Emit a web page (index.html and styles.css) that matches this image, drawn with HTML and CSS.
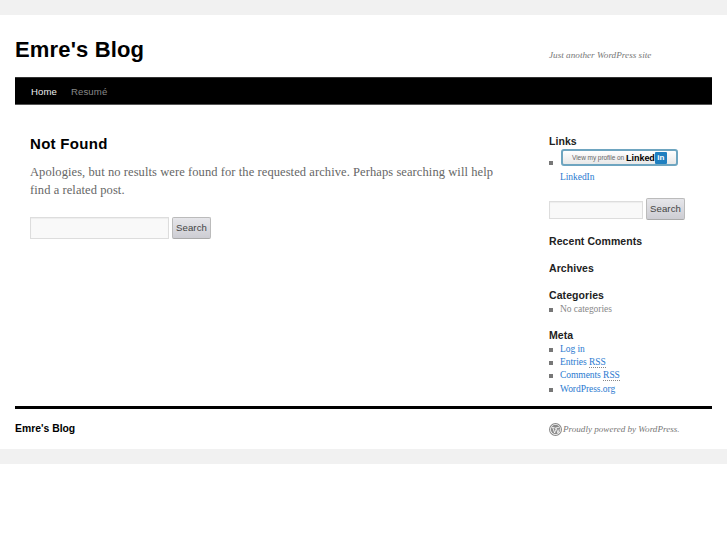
FILE: index.html
```html
<!DOCTYPE html>
<html lang="en">
<head>
<meta charset="utf-8">
<title>Emre's Blog</title>
<link rel="stylesheet" href="styles.css">
</head>
<body>
<div class="wrapper">
  <header class="masthead">
    <a class="site-title" href="#">Emre's Blog</a>
    <div class="tagline">Just another WordPress site</div>
  </header>
  <nav class="nav">
    <a class="nav-item current" href="#">Home</a>
    <a class="nav-item" href="#">Resumé</a>
  </nav>
  <div class="columns">
    <main class="main">
      <h1 class="page-title">Not Found</h1>
      <p class="lead">Apologies, but no results were found for the requested archive. Perhaps searching will help find a related post.</p>
      <form class="search search-main">
        <input class="search-input" type="text"><button class="search-btn" type="button">Search</button>
      </form>
    </main>
    <aside class="sidebar">
      <section class="widget widget-links">
        <h3 class="widget-title">Links</h3>
        <ul class="list">
          <li class="badge-item">
            <span class="li-badge"><span class="li-view">View my profile on</span><span class="li-name">Linked</span><span class="li-in">in</span></span>
            <a class="li-link" href="#">LinkedIn</a>
          </li>
        </ul>
      </section>
      <form class="search search-side">
        <input class="search-input" type="text"><button class="search-btn" type="button">Search</button>
      </form>
      <section class="widget widget-recent"><h3 class="widget-title">Recent Comments</h3></section>
      <section class="widget"><h3 class="widget-title">Archives</h3></section>
      <section class="widget">
        <h3 class="widget-title">Categories</h3>
        <ul class="list"><li class="muted">No categories</li></ul>
      </section>
      <section class="widget widget-meta">
        <h3 class="widget-title">Meta</h3>
        <ul class="list list-meta">
          <li><a href="#">Log in</a></li>
          <li><a href="#">Entries <abbr class="abbr">RSS</abbr></a></li>
          <li><a href="#">Comments <abbr class="abbr">RSS</abbr></a></li>
          <li><a href="#">WordPress.org</a></li>
        </ul>
      </section>
    </aside>
  </div>
  <footer class="footer">
    <a class="footer-title" href="#">Emre's Blog</a>
    <a class="powered" href="#">
      <svg class="wp" viewBox="0 0 24 24" width="13" height="13"><circle cx="12" cy="12" r="11" fill="none" stroke="#8a8a8a" stroke-width="2"/><circle cx="12" cy="12" r="8.6" fill="#8a8a8a"/><path d="M5 8.5h5M13.5 8.5h5M7 8.5l3.4 10L12.5 12l-1.5-3.5M13 8.5l3.5 10 2.3-7" fill="none" stroke="#fff" stroke-width="1.5"/></svg>
      <span>Proudly powered by WordPress.</span>
    </a>
  </footer>
</div>
</body>
</html>
```
FILE: styles.css
```css
html { background: #fff; }
body {
  margin: 0;
  padding: 15px 0;
  background: #f1f1f1;
  font-family: "Liberation Serif", serif;
  color: #666;
}
a { text-decoration: none; }
.wrapper {
  background: #fff;
  padding: 0 15px;
  height: 434px;
  box-sizing: border-box;
  display: flex;
  flex-direction: column;
}
.masthead {
  height: 62px;
  display: flex;
  flex-shrink: 0;
}
.site-title {
  font: bold 22px/24px "Liberation Sans", sans-serif;
  letter-spacing: 0.15px;
  color: #000;
  margin-top: 23px;
}
.tagline {
  margin: 34px 0 0 auto;
  width: 163px;
  font-size: 9.2px;
  line-height: 12px;
  font-style: italic;
  color: #777;
}
.nav {
  height: 28px;
  background: #000;
  border-top: 1px solid #333;
  border-bottom: 1px solid #555;
  box-sizing: border-box;
  display: flex;
  flex-shrink: 0;
  padding: 1px 0 0 16px;
  gap: 14px;
  align-items: center;
  font: 9.6px/12px "Liberation Sans", sans-serif;
  letter-spacing: 0.1px;
}
.nav-item { color: #888; }
.nav-item.current { color: #eee; }
.columns {
  display: flex;
  justify-content: space-between;
  height: 301px;
  flex-shrink: 0;
}
.main {
  width: 480px;
  margin-left: 15px;
}
.page-title {
  font: bold 15px/20px "Liberation Sans", sans-serif;
  letter-spacing: 0.3px;
  color: #000;
  margin: 29px 0 0;
}
.lead {
  font-size: 12.5px;
  line-height: 18px;
  letter-spacing: 0.08px;
  color: #666;
  margin: 9px 0 0;
  width: 480px;
}
.search { display: flex; align-items: flex-end; }
.search-main { margin-top: 18px; gap: 3px; }
.search-side { margin-top: 14px; gap: 3px; }
.search-input {
  box-sizing: border-box;
  padding: 0;
  margin: 0;
  background: #f9f9f9;
  border: 1px solid #ddd;
  box-shadow: inset 0 1px 1px rgba(0,0,0,.05);
  width: 139px;
  height: 22px;
}
.search-side .search-input { width: 94px; height: 18px; margin-bottom: 1px; }
.search-btn {
  box-sizing: border-box;
  margin: 0;
  padding: 0;
  width: 39px;
  height: 22px;
  font: 9.6px/14px "Liberation Sans", sans-serif;
  letter-spacing: 0.1px;
  color: #444;
  background: linear-gradient(#e6e6ea, #cdcdd3);
  border: 1px solid #bbb;
  border-bottom-color: #aaa;
  border-radius: 2px;
}
.sidebar {
  width: 163px;
  font-size: 9.5px;
  line-height: 13px;
}
.widget-title {
  font: bold 10.5px/14px "Liberation Sans", sans-serif;
  letter-spacing: 0.07px;
  color: #222;
  margin: 0;
}
.widget { margin-top: 13px; }
.widget-links { margin-top: 29px; }
.widget-recent { margin-top: 14px; }
.widget-meta { margin-top: 12px; }
.list {
  list-style: none;
  margin: 1px 0 0;
  padding: 0;
}
.list-meta { margin-top: 0.6px; }
.list li {
  position: relative;
  padding-left: 11px;
  height: 13.3px;
  letter-spacing: -0.05px;
}
.list li::before {
  content: "";
  position: absolute;
  left: 0;
  top: 5px;
  width: 4px;
  height: 4px;
  background: #777;
}
.list a { color: #2a7ad0; }
.list .muted { color: #888; }
.abbr { border-bottom: 1px dotted #888; }
.list .badge-item { height: 35px; }
.list .badge-item::before { top: 12px; }
.li-badge {
  display: flex;
  align-items: center;
  box-sizing: border-box;
  width: 117px;
  height: 17px;
  margin-left: 1px;
  padding-left: 9px;
  background: linear-gradient(#fff, #e8e8e8);
  border: 2px solid #6ea5c0;
  border-radius: 3px;
}
.li-view {
  font: 6.5px/10px "Liberation Sans", sans-serif;
  letter-spacing: -0.05px;
  color: #666;
}
.li-name {
  font: bold 9px/10px "Liberation Sans", sans-serif;
  color: #000;
  margin-left: 2px;
}
.li-in {
  font: bold 8px/12px "Liberation Sans", sans-serif;
  color: #fff;
  background: #1f7fc0;
  width: 12px;
  height: 12px;
  text-align: center;
  border-radius: 1px;
}
.li-link { display: block; margin-top: 5px; }
.footer {
  border-top: 3px solid #000;
  display: flex;
  justify-content: space-between;
  padding-top: 12px;
}
.footer-title {
  font: bold 10.4px/14px "Liberation Sans", sans-serif;
  color: #000;
  margin-top: 1px;
}
.powered {
  width: 163px;
  display: flex;
  align-items: center;
  gap: 1px;
  height: 14px;
  margin-top: 1px;
  font-size: 9.1px;
  font-style: italic;
  color: #777;
}
.wp { flex-shrink: 0; }
```
